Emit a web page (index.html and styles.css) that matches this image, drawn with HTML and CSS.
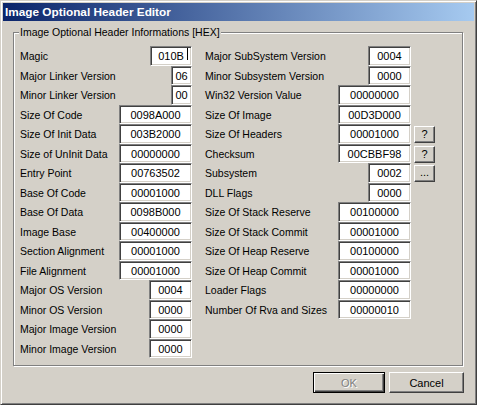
FILE: index.html
```html
<!DOCTYPE html>
<html>
<head>
<meta charset="utf-8">
<title>Image Optional Header Editor</title>
<link rel="stylesheet" href="styles.css">
</head>
<body>
<div class="window">
  <div class="titlebar"><span class="title">Image Optional Header Editor</span></div>
  <div class="body">
    <fieldset class="group">
      <legend>Image Optional Header Informations [HEX]</legend>
      <div class="cols">
        <div class="col col-left">
          <div class="row"><span class="label">Magic</span><div class="field w-magic">010B<span class="caret"></span></div></div>
          <div class="row"><span class="label">Major Linker Version</span><div class="field w2">06</div></div>
          <div class="row"><span class="label">Minor Linker Version</span><div class="field w2">00</div></div>
          <div class="row"><span class="label">Size Of Code</span><div class="field w8">0098A000</div></div>
          <div class="row"><span class="label">Size Of Init Data</span><div class="field w8">003B2000</div></div>
          <div class="row"><span class="label">Size of UnInit Data</span><div class="field w8">00000000</div></div>
          <div class="row"><span class="label">Entry Point</span><div class="field w8">00763502</div></div>
          <div class="row"><span class="label">Base Of Code</span><div class="field w8">00001000</div></div>
          <div class="row"><span class="label">Base Of Data</span><div class="field w8">0098B000</div></div>
          <div class="row"><span class="label">Image Base</span><div class="field w8">00400000</div></div>
          <div class="row"><span class="label">Section Alignment</span><div class="field w8">00001000</div></div>
          <div class="row"><span class="label">File Alignment</span><div class="field w8">00001000</div></div>
          <div class="row"><span class="label">Major OS Version</span><div class="field w4">0004</div></div>
          <div class="row"><span class="label">Minor OS Version</span><div class="field w4">0000</div></div>
          <div class="row"><span class="label">Major Image Version</span><div class="field w4">0000</div></div>
          <div class="row"><span class="label">Minor Image Version</span><div class="field w4">0000</div></div>
        </div>
        <div class="col col-right">
          <div class="row"><span class="label">Major SubSystem Version</span><div class="field w4">0004</div><div class="slot"></div></div>
          <div class="row"><span class="label">Minor Subsystem Version</span><div class="field w4">0000</div><div class="slot"></div></div>
          <div class="row"><span class="label">Win32 Version Value</span><div class="field w8">00000000</div><div class="slot"></div></div>
          <div class="row"><span class="label">Size Of Image</span><div class="field w8">00D3D000</div><div class="slot"></div></div>
          <div class="row"><span class="label">Size Of Headers</span><div class="field w8">00001000</div><div class="slot"><button class="tool">?</button></div></div>
          <div class="row"><span class="label">Checksum</span><div class="field w8">00CBBF98</div><div class="slot"><button class="tool">?</button></div></div>
          <div class="row"><span class="label">Subsystem</span><div class="field w4">0002</div><div class="slot"><button class="tool tool-dots">...</button></div></div>
          <div class="row"><span class="label">DLL Flags</span><div class="field w4">0000</div><div class="slot"></div></div>
          <div class="row"><span class="label">Size Of Stack Reserve</span><div class="field w8">00100000</div><div class="slot"></div></div>
          <div class="row"><span class="label">Size Of Stack Commit</span><div class="field w8">00001000</div><div class="slot"></div></div>
          <div class="row"><span class="label">Size Of Heap Reserve</span><div class="field w8">00100000</div><div class="slot"></div></div>
          <div class="row"><span class="label">Size Of Heap Commit</span><div class="field w8">00001000</div><div class="slot"></div></div>
          <div class="row"><span class="label">Loader Flags</span><div class="field w8">00000000</div><div class="slot"></div></div>
          <div class="row"><span class="label">Number Of Rva and Sizes</span><div class="field w8">00000010</div><div class="slot"></div></div>
        </div>
      </div>
    </fieldset>
    <div class="actions">
      <button class="btn btn-default" disabled>OK</button>
      <button class="btn btn-cancel">Cancel</button>
    </div>
  </div>
</div>
</body>
</html>
```

FILE: styles.css
```css
html, body {
  margin: 0;
  padding: 0;
}

body {
  background: #d4d0c8;
  font-family: "Liberation Sans", Arial, sans-serif;
  font-size: 10.5px;
  color: #000;
}

.window {
  width: 477px;
  height: 405px;
  box-sizing: border-box;
  border: 1px solid;
  border-color: #d4d0c8 #404040 #404040 #d4d0c8;
  box-shadow: inset 1px 1px 0 #fff, inset -1px -1px 0 #808080;
  padding: 2px;
  background: #d4d0c8;
  display: flex;
  flex-direction: column;
}

.titlebar {
  height: 18px;
  flex: none;
  background: linear-gradient(to right, #0a246a, #a6caf0);
  display: flex;
  align-items: center;
  padding-left: 2px;
}

.title {
  color: #fff;
  font-weight: bold;
  font-size: 11.8px;
}

.body {
  flex: 1;
  padding: 5px 10px 0 10px;
  display: flex;
  flex-direction: column;
}

.group {
  margin: 0;
  padding: 7px 6px 7px 6px;
  width: 450px;
  box-sizing: border-box;
  border: 1px solid #808080;
  box-shadow: 1px 1px 0 #fff, inset 1px 1px 0 #fff;
  min-inline-size: auto;
}

.group legend {
  padding: 0 1px;
  margin-left: -1px;
  line-height: 13px;
  font-size: 10.5px;
  background: #d4d0c8;
}

.cols {
  display: flex;
  gap: 13px;
  align-items: flex-start;
}

.col {
  display: flex;
  flex-direction: column;
  flex: none;
}

.col-left {
  width: 172px;
}

.col-right {
  width: 230px;
}

.row {
  height: 19.5px;
  display: flex;
  align-items: center;
}

.label {
  flex: 1;
  white-space: nowrap;
  padding-top: 1px;
}

.field {
  position: relative;
  flex: none;
  height: 100%;
  box-sizing: border-box;
  border: 1px solid;
  border-color: #808080 #fff #fff #808080;
  box-shadow: inset 1px 1px 0 #404040, inset -1px -1px 0 #d4d0c8;
  background: #fff;
  display: flex;
  align-items: center;
  justify-content: center;
  padding-top: 1px;
  font-size: 11px;
}

.w2 { width: 21px; }
.w4 { width: 43px; }
.w8 { width: 73px; }
.w-magic { width: 42px; }

.caret {
  position: absolute;
  right: 3px;
  top: 1px;
  width: 1px;
  height: 12px;
  background: #000;
}

.slot {
  flex: none;
  width: 24px;
  height: 100%;
  display: flex;
  justify-content: flex-end;
  align-items: flex-start;
}

.tool {
  margin-top: 2px;
  width: 21px;
  height: 17px;
  box-sizing: border-box;
  padding: 0;
  border: 1px solid;
  border-color: #fff #404040 #404040 #fff;
  box-shadow: inset -1px -1px 0 #808080;
  background: #d4d0c8;
  font-family: "Liberation Sans", Arial, sans-serif;
  font-size: 11px;
  color: #000;
  display: flex;
  align-items: center;
  justify-content: center;
  line-height: 1;
}

.tool-dots {
  align-items: flex-end;
  padding-bottom: 3px;
}

.actions {
  margin-top: 6px;
  display: flex;
  justify-content: flex-end;
  gap: 4px;
}

.btn {
  height: 21px;
  box-sizing: border-box;
  padding: 0;
  background: #d4d0c8;
  font-family: "Liberation Sans", Arial, sans-serif;
  font-size: 11px;
  color: #000;
  border: 1px solid;
  border-color: #fff #404040 #404040 #fff;
  box-shadow: inset -1px -1px 0 #808080;
}

.btn-cancel {
  width: 75px;
}

.btn-default {
  width: 72px;
  border: 1px solid #000;
  box-shadow: inset 1px 1px 0 #fff, inset -1px -1px 0 #404040, inset -2px -2px 0 #808080;
  color: #808080;
  text-shadow: 1px 1px 0 #fff;
}
```
